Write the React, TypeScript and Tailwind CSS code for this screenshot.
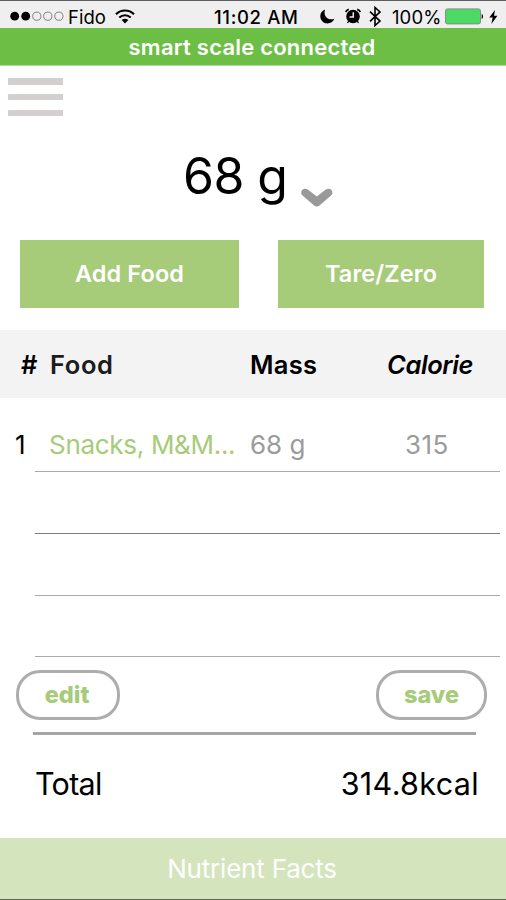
import { useState } from "react";

interface FoodEntry {
  name: string;
  mass: string;
  calorie: number;
}

const entries: (FoodEntry | null)[] = [
  { name: "Snacks, M&M...", mass: "68 g", calorie: 315 },
  null,
  null,
  null,
];

const rowStyles = [
  "h-[74px] border-[#a9a9a9]",
  "h-[62px] border-[#7d7d7d]",
  "h-[62px] border-[#ababab]",
  "h-[61px] border-[#ababab]",
];

function StatusBar() {
  return (
    <div className="flex h-7 items-center border-t border-[#5f5c60] bg-[#efefef] text-[18px] leading-none text-black">
      {/* Signal strength */}
      <svg className="ml-[10px] mt-[4px] shrink-0" width="54" height="11" viewBox="0 0 54 11">
        <circle cx="4.7" cy="5.2" r="4.4" />
        <circle cx="15.7" cy="5.2" r="4.4" />
        <g fill="none" stroke="#555" strokeWidth="0.7">
          <circle cx="26.8" cy="5.2" r="4.1" />
          <circle cx="37.8" cy="5.2" r="4.1" />
          <circle cx="48.9" cy="5.2" r="4.1" />
        </g>
      </svg>
      <span className="ml-1 mt-[6px] w-[38px] whitespace-nowrap text-[18.5px]">Fido</span>
      <svg className="ml-[9px] mt-[3px] shrink-0" width="20" height="15" viewBox="0 0 20 15">
        <g fill="none" stroke="#000" strokeWidth="2.1">
          <path d="M1 5.2C6 .2 14 .2 19 5.2" />
          <path d="M4.3 8.6c3.2-3.1 8.2-3.1 11.4 0" />
        </g>
        <path d="M6.7 11.1c1.8-1.7 4.8-1.7 6.6 0L10 14.5z" />
      </svg>
      <span className="ml-[79px] mt-[6px] w-[85px] whitespace-nowrap text-[18.5px] font-medium tracking-[0.65px]">11:02 AM</span>
      <svg className="ml-[21px] mt-[4px] shrink-0" width="15" height="15" viewBox="0 0 15 15">
        <path d="M5 .5C1.8 1.8.3 4.3.3 7.2c0 4 3.1 7.2 7.1 7.2 3.1 0 5.8-1.7 7-4.6-5.2 2-11.6-1.6-9.4-9.3z" />
      </svg>
      <svg className="ml-[10px] mt-[3px] shrink-0" width="16" height="16" viewBox="0 0 16 16">
        <circle cx="8" cy="8.5" r="6.8" />
        <path d="M.8 4.1Q1.3 2 3.8 1.400M15.200 4.100Q14.700 2 12.200 1.400" fill="none" stroke="#000" strokeWidth="1.700" />
        <path d="M3.800 13l-1.300 2M12.200 13l1.300 2" stroke="#000" strokeWidth="1.300" />
        <path d="M8.300 4.200v4.800H4.600" fill="none" stroke="#efefef" strokeWidth="1.500" />
      </svg>
      <svg className="ml-[8px] mt-[4px] shrink-0" width="13" height="21" viewBox="0 0 13 21">
        <path d="M1 5.6l10 9.5-5 4.4V1.5l5 4.4-10 9.5" fill="none" stroke="#000" strokeWidth="1.6" />
      </svg>
      <span className="ml-[10px] mt-[6px] w-[48px] whitespace-nowrap text-[18.5px] tracking-[0.1px]">100%</span>
      <svg className="ml-[5px] mt-[4px] shrink-0" width="39" height="17" viewBox="0 0 39 17">
        <rect x=".5" y=".9" width="35" height="15" rx="2" fill="#4cd964" stroke="#8b8b8b" />
        <path d="M36.7 6v5c1.8-.6 1.8-4.4 0-5z" />
      </svg>
      <svg className="ml-[5px] mt-[4px] shrink-0" width="9" height="14" viewBox="0 0 9 14">
        <path d="M6 0L.3 7.5h3.4L2.4 14l6-8.3H5z" />
      </svg>
    </div>
  );
}

export default function App() {
  const [unit] = useState("g");

  return (
    <div className="flex h-[900px] w-[506px] flex-col overflow-hidden bg-white font-['Inter',sans-serif] text-black">
      <StatusBar />

      <div className="flex h-[38px] shrink-0 items-center justify-center border-b border-[#b0dc9a] bg-[#6cbe45] pr-[2px] text-[22px] font-semibold leading-none tracking-[0.22px] text-white">
        <span className="whitespace-nowrap">smart scale connected</span>
      </div>

      {/* Menu */}
      <button className="ml-2 mt-3 flex h-[38px] w-[55px] shrink-0 flex-col justify-between">
        <span className="h-[6.5px] w-full bg-[#d3cfcf]" />
        <span className="h-[6.5px] w-full bg-[#d3cfcf]" />
        <span className="h-[6.5px] w-full bg-[#d3cfcf]" />
      </button>

      {/* Current weight */}
      <div className="mt-[29px] flex h-[62px] shrink-0 items-center pl-[183px]">
        <span className="w-[107px] whitespace-nowrap text-[50px] leading-[62px] tracking-[-0.6px]">68 {unit}</span>
        <svg className="ml-[10px] mt-[42px]" width="34" height="21" viewBox="0 0 34 21">
          <path
            d="M7.800 2.600L16.800 9.600 25.800 2.600C27.800 1.200 30.200 1.300 31.600 3.200 33 5.200 32.600 7.300 30.800 8.800L19.800 18.200C17.900 19.800 15.700 19.800 13.800 18.200L2.800 8.800C1 7.300.6 5.200 2 3.200 3.400 1.300 5.800 1.200 7.800 2.600z"
            fill="#999"
          />
        </svg>
      </div>

      <div className="mt-[32.5px] flex h-[68px] shrink-0 gap-[39px] pl-5 text-[23.5px] font-semibold text-white">
        <button className="w-[219px] whitespace-nowrap bg-[#a6cb79] pt-px tracking-[0.1px]">Add Food</button>
        <button className="w-[206px] whitespace-nowrap bg-[#a6cb79] pt-px tracking-[0.1px]">Tare/Zero</button>
      </div>

      {/* Food table */}
      <div className="mt-[22.5px] grid h-[68px] shrink-0 grid-cols-[29px_201px_137px_1fr] items-center bg-[#f3f3f3] pl-[21px] pt-[3px] text-[25.5px] font-semibold">
        <span>#</span>
        <span className="tracking-[0.6px] text-[#1c1c1c]">Food</span>
        <span className="-ml-px tracking-[0.3px]">Mass</span>
        <span className="-ml-px italic tracking-[-0.4px]">Calorie</span>
      </div>
      <div className="shrink-0">
        {entries.map((entry, i) => (
          <div key={i} className="flex">
            <span className="w-[35px] pl-[15px] pt-[28px] text-[26px] leading-[38px]">{entry && i + 1}</span>
            <div className={`w-[465px] border-b ${rowStyles[i]}`}>
              {entry && (
                <div className="grid grid-cols-[201px_155px_1fr] whitespace-nowrap pl-[14px] pt-[28px] text-[26px] leading-[38px] text-[#9b9b9b]">
                  <span className="tracking-[-0.3px] text-[#a6cb79]">{entry.name}</span>
                  <span>{entry.mass}</span>
                  <span className="tracking-[0.4px]">{entry.calorie}</span>
                </div>
              )}
            </div>
          </div>
        ))}
      </div>

      <div className="mt-[13px] flex h-[50px] shrink-0 justify-between pl-4 pr-[19px] text-[23.5px] font-extrabold text-[#a6cb79]">
        <button className="w-[104px] rounded-[24px] border-[3px] border-[#adadad] pr-[2px]">edit</button>
        <button className="w-[111px] rounded-[24px] border-[3px] border-[#adadad]">save</button>
      </div>
      <div className="ml-[33px] mt-[11.5px] h-[3.5px] w-[443px] shrink-0 bg-[#a6a6a6]" />

      <div className="mt-[29px] flex h-10 shrink-0 items-center justify-between pl-[35px] pr-[27px] text-[30.5px]">
        <span className="tracking-[-0.7px]">Total</span>
        <span className="tracking-[0.35px]">314.8kcal</span>
      </div>

      <button className="mt-auto flex h-[62px] shrink-0 items-center justify-center border-b border-[#5d6652] bg-[#d4e4bc] pr-[2px] text-[26px] tracking-[-0.2px] text-white">
        Nutrient Facts
      </button>
    </div>
  );
}
